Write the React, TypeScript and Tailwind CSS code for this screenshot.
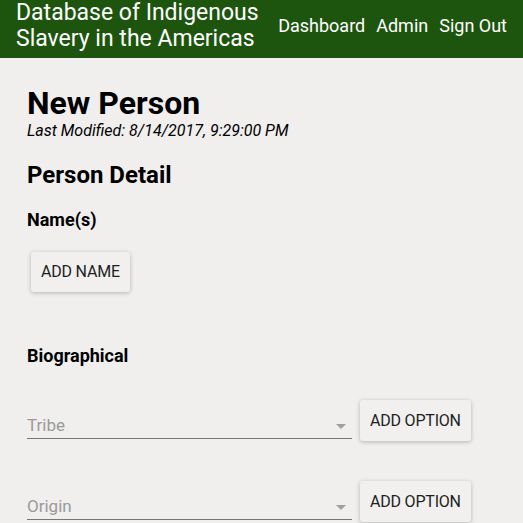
import React from "react";

function Caret() {
  return (
    <svg width="10" height="5" viewBox="0 0 10 5" className="absolute right-[6px] bottom-[9px]">
      <path d="M0 0 L10 0 L5 5 Z" fill="#a0a0a0" />
    </svg>
  );
}

function SelectRow({ label }: { label: string }) {
  return (
    <div className="flex items-start gap-[8px]">
      <div className="relative w-[325px] h-[39px] border-b border-[#767676]">
        <span className="absolute left-0 bottom-[2px] text-[17px] leading-[22px] text-[#9a9a9a]">{label}</span>
        <Caret />
      </div>
      <button className="h-[41px] px-[10px] rounded-[3px] bg-[#f1f0ef] text-[16px] tracking-[-0.2px] text-[#1e1e1e] shadow-[0_1px_4px_rgba(0,0,0,0.25)]">
        ADD OPTION
      </button>
    </div>
  );
}

export default function App() {
  return (
    <div className="w-[523px] h-[523px] overflow-hidden bg-[#f0efee] font-['Roboto',sans-serif]">
      <header className="h-[58px] bg-[#1e550e] flex items-start justify-between pl-[16px] pr-[16px]">
        <div className="text-white text-[23px] leading-[26px]">
          <div>Database of Indigenous</div>
          <div>Slavery in the Americas</div>
        </div>
        <nav className="mt-[14px] flex gap-[11px] text-white text-[18px] leading-[24px]">
          <span>Dashboard</span>
          <span>Admin</span>
          <span>Sign Out</span>
        </nav>
      </header>
      <main className="pl-[27px] pt-[27px]">
        <h1 className="text-[32px] leading-[36px] font-bold text-black">New Person</h1>
        <div className="text-[16px] leading-[20px] italic text-black">Last Modified: 8/14/2017, 9:29:00 PM</div>
        <h2 className="mt-[20px] text-[24px] leading-[28px] font-bold text-black">Person Detail</h2>
        <h3 className="mt-[19px] text-[18px] leading-[24px] font-bold text-black">Name(s)</h3>
        <button className="mt-[20px] ml-[4px] h-[40px] px-[10px] rounded-[3px] bg-[#f1f0ef] text-[16px] tracking-[-0.2px] text-[#1e1e1e] shadow-[0_1px_4px_rgba(0,0,0,0.25)]">
          ADD NAME
        </button>
        <h3 className="mt-[52px] text-[18px] leading-[24px] font-bold text-black">Biographical</h3>
        <div className="mt-[32px] flex flex-col gap-[40px]">
          <SelectRow label="Tribe" />
          <SelectRow label="Origin" />
        </div>
      </main>
    </div>
  );
}
